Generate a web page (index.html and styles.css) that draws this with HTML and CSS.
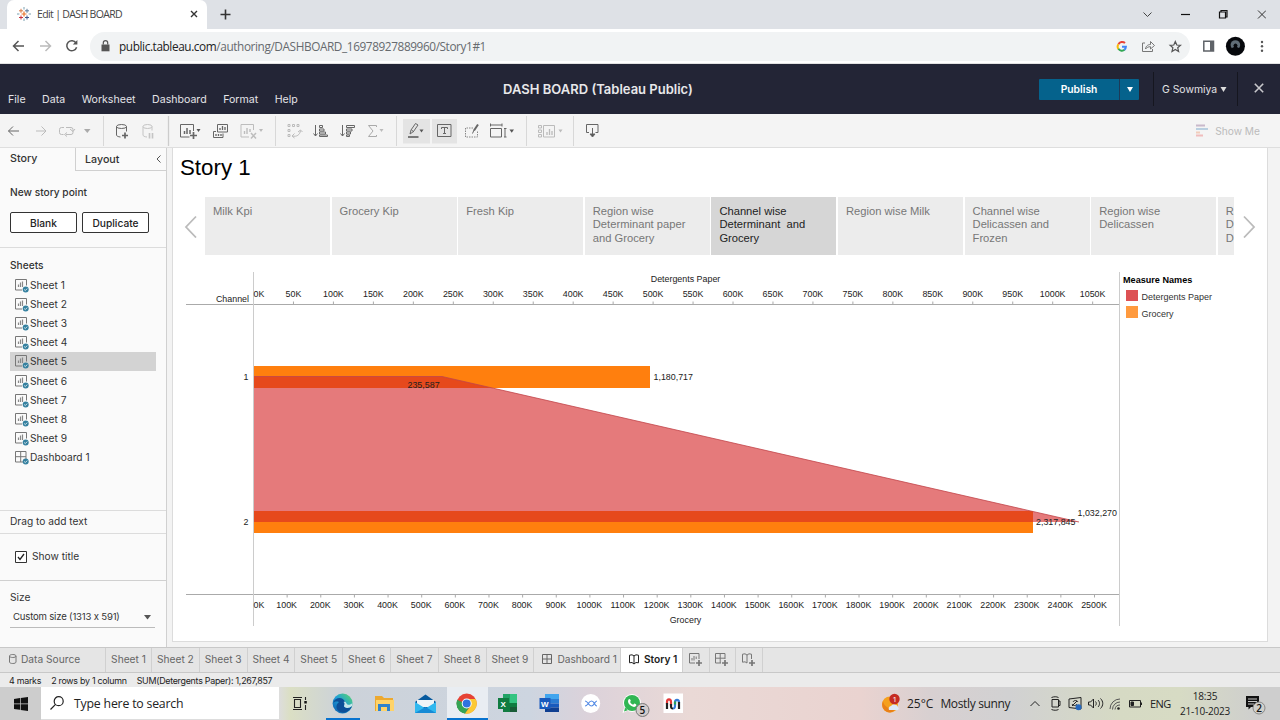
FILE: index.html
```html
<!DOCTYPE html>
<html lang="en">
<head>
<meta charset="utf-8">
<title>Edit | DASH BOARD</title>
<link rel="stylesheet" href="styles.css">
</head>
<body>
<svg class="defs" width="0" height="0" aria-hidden="true">
  <symbol id="sheet" viewBox="0 0 14 14"><path d="M11.500 6.500V.5H.5v10.500h6.500" fill="none" stroke="#777"/><path d="M3.500 8V5.500M5.500 8V3.500M7.500 8V2.500" stroke="#888" stroke-width="1.200"/><circle cx="10.700" cy="10.500" r="3" fill="#34809f"/><path d="M9.200 10.500l1.100 1.100 1.900-2" stroke="#fff" fill="none" stroke-width=".8"/></symbol>
  <symbol id="dash" viewBox="0 0 14 14"><path d="M.5.5h10.500v10.500H.5zM5.700.5v10.500M.5 5.700h10.500" fill="none" stroke="#777"/><circle cx="10.700" cy="10.500" r="3" fill="#34809f"/><path d="M9.200 10.500l1.100 1.100 1.900-2" stroke="#fff" fill="none" stroke-width=".8"/></symbol>
  <symbol id="book" viewBox="0 0 10 11"><path d="M.5 1.200L3 .8l2 1.100 2-1.100 2.500.4v7.600L7 8.500 5 10 3 8.500l-2.500.3zM5 2v8" fill="none" stroke="currentColor"/></symbol>
  <symbol id="grid" viewBox="0 0 10 10"><path d="M.5.5h9v9h-9zM5 .5v9M.5 5h9" fill="none" stroke="currentColor"/></symbol>
</svg>

<header class="tabstrip">
  <div class="tab">
    <svg class="favicon" width="14" height="14" viewBox="0 0 14 14" fill="none"><path d="M7 4.500v5M4.500 7h5" stroke="#e8762c" stroke-width="1.200"/><path d="M4 1.800v4M2 3.800h4" stroke="#d97a45"/><path d="M10 1.800v4M8 3.800h4" stroke="#5b7a9a"/><path d="M4 8.500v4M2 10.500h4" stroke="#c8303c"/><path d="M10 8.500v4M8 10.500h4" stroke="#3b5488"/><path d="M7 0v2.500M7 11.500V14M0 7h2.400M11.600 7H14" stroke="#7aa0b0"/></svg>
    <span class="tab-title">Edit | DASH BOARD</span>
    <svg class="tab-x" width="8" height="8" viewBox="0 0 8 8"><path d="M1 1l6 6M7 1L1 7" stroke="#333" stroke-width="1.400"/></svg>
  </div>
  <svg class="newtab" width="11" height="11" viewBox="0 0 11 11"><path d="M5.500.5v10M.5 5.500h10" stroke="#333" stroke-width="1.600"/></svg>
  <svg class="winctl" width="124" height="14" viewBox="1141 8 124 14" fill="none" stroke="#111"><path d="M1142.500 12.500l4 4 4-4" stroke="#444"/><path d="M1180 14.500h9" stroke-width="1.200"/><path d="M1218.500 12h6v6h-6zM1220 11.500v-1h6v6.500h-1.500" stroke-width="1.200"/><path d="M1257 10.500l8 8M1265 10.500l-8 8" stroke="#333"/></svg>
</header>

<div class="addressbar">
  <svg width="80" height="20" viewBox="0 0 80 20" fill="none"><path d="M24 10H13.500M18.500 5l-5 5 5 5" stroke="#555" stroke-width="1.500"/><path d="M40 10h10M45.500 5l5 5-5 5" stroke="#bbb" stroke-width="1.500"/><path d="M76 7a5 5 0 1 0 .6 4.200" stroke="#555" stroke-width="1.500"/><path d="M77.400 4v4.600h-4.600z" fill="#555"/></svg>
  <div class="omnibox">
    <svg width="9" height="12" viewBox="0 0 9 12"><path d="M.5 4.500h8v6.800h-8z" fill="#555"/><path d="M2.300 4.500V2.800a2.200 2.200 0 0 1 4.400 0v1.700" fill="none" stroke="#555" stroke-width="1.200"/></svg>
    <span class="url"><b>public.tableau.com</b>/authoring/DASHBOARD_16978927889960/Story1#1</span>
    <svg class="omni-icons" width="66" height="14" viewBox="1116 39 66 14" fill="none"><g stroke-width="2"><path d="M1118.400 44.400a4.200 4.200 0 0 1 6.600-1.300" stroke="#ea4335"/><path d="M1118.400 44.200a4.300 4.300 0 0 0 0 4.800" stroke="#fbbc05"/><path d="M1118.400 48.800a4.300 4.300 0 0 0 6.200 1" stroke="#34a853"/><path d="M1124.300 49.900a4.200 4.200 0 0 0 1.600-3.200H1122" stroke="#4285f4"/></g><path d="M1145 43h-2.500v8.500h10V49M1145.500 49c.5-3.500 3-4.500 5-4.500V41.500l4 4-4 3.500v-2.300c-2 0-3.500.5-5 2.300z" stroke="#777"/><path d="M1175.300 41.500l1.500 3.500 3.700.3-2.800 2.400.9 3.700-3.300-2-3.300 2 .9-3.700-2.800-2.400 3.700-.3z" stroke="#555" stroke-width="1.200"/></svg>
  </div>
  <svg class="profile" width="66" height="20" viewBox="1202 36 66 20"><path d="M1203.800 41.300h9.700v9.700h-9.700z" fill="#fff" stroke="#5f6368" stroke-width="1.500"/><path d="M1210 41h3.500v10h-3.500z" fill="#5f6368"/><circle cx="1235.400" cy="46.300" r="9.500" fill="#06080c"/><circle cx="1235.400" cy="45" r="4.800" fill="#8799a5" opacity=".7"/><path d="M1231 51c0-3 2-3.500 3-4a2 2 0 1 1 3 0c1 .5 3 1 3 4z" fill="#06080c"/><g fill="#555"><circle cx="1262" cy="42" r="1.200"/><circle cx="1262" cy="46.300" r="1.200"/><circle cx="1262" cy="50.700" r="1.200"/></g></svg>
</div>

<div class="apphead">
  <nav class="menu"><span>File</span><span>Data</span><span>Worksheet</span><span>Dashboard</span><span>Format</span><span>Help</span></nav>
  <div class="apptitle">DASH BOARD (Tableau Public)</div>
  <div class="account">
    <div class="publish"><span>Publish</span><i><svg width="6" height="5" viewBox="0 0 6 5"><path d="M0 0h6L3 5z" fill="#fff"/></svg></i></div>
    <div class="user"><span>G Sowmiya</span><svg width="7" height="5" viewBox="0 0 6 5"><path d="M0 0h6L3 5z" fill="#ddd"/></svg></div>
    <svg class="close" width="10" height="10" viewBox="0 0 10 10"><path d="M.8.8l8.400 8.400M9.200.8L.8 9.200" stroke="#c8c8cc" stroke-width="1.600"/></svg>
  </div>
</div>

<div class="toolbar">
  <svg width="620" height="33" viewBox="0 114 620 33" fill="none" stroke="#666">
    <path d="M19 131H8.500M13 126.500L8.500 131l4.500 4.500"/>
    <path d="M36 131h10M41.500 126.500L46 131l-4.500 4.500" stroke="#bbb"/>
    <path d="M64 127.500h-2.500a2 2 0 0 0-2 2v3a2 2 0 0 0 2 2h2M66 134.500h5a2 2 0 0 0 2-2v-3a2 2 0 0 0-2-2h-5M67 132.500l-2.500 2 2.500 2M70 129l3 2.500 2-2.500" stroke="#bbb"/>
    <path d="M84 129h6.500l-3.200 4z" fill="#aaa" stroke="none"/>
    <path d="M103.500 116v30M275.500 116v30M396.500 116v30M526.500 116v30M573.500 116v30" stroke="#d8d8d8"/><path d="M168.500 116v30" stroke="#ccc" stroke-width="1.300"/>
    <ellipse cx="121.500" cy="126.500" rx="5" ry="2"/><path d="M116.500 126.500v8.500c0 1 1.500 1.800 4 2M126.500 126.500v5"/><path d="M125 132.500v6M122 135.500h6" stroke-width="1.700"/>
    <g stroke="#c4c4c4"><ellipse cx="147.500" cy="126.500" rx="4.500" ry="2"/><path d="M143 126.500v8.500c0 1 1.500 1.800 4 2M152 126.500v4"/><path d="M149.500 133v5.500M152.500 133v5.500" stroke-width="1.600"/></g>
    <path d="M193.500 131v-6.500h-13v12.500h9"/><path d="M184.500 134v-3M187 134v-6M190 134v-4" stroke-width="1.500"/><path d="M193.500 132v7M190 135.500h7" stroke-width="1.700"/><path d="M196.500 129h4l-2 3z" fill="#555" stroke="none"/>
    <path d="M217.500 124.500h10v7.500h-10zM216 131.500h-2.500v6h9.500v-4"/><path d="M220 130v-2M222.500 130v-4M225 130v-3M216 136v-2M218.500 136v-2M221 136v-2" stroke-width="1.300"/>
    <g stroke="#bdbdbd"><path d="M253.500 130v-5.500h-12.500v12.500h8"/><path d="M244.500 134v-3M247 134v-6M250 132v-3" stroke-width="1.400"/><path d="M251 133l5 5.500M256 133l-5 5.500" stroke-width="1.500"/></g><path d="M259 129h4l-2 3z" fill="#bbb" stroke="none"/>
    <path d="M288 124.500h2v2h-2zM292.500 124.500h2v2h-2zM297 124.500h2v2h-2zM288 129.500h2v2h-2zM288 134.500h2v2h-2zM292.500 136c4 1 7.500-1 8-5.500M298 132l2.500-2 2 2M294.500 133.500l-2.500 2.500 2.500 2" stroke="#bbb"/>
    <path d="M315.500 125v11M313.500 133.500l2 2.500 2-2.500M319.500 125.500h3v2h-3zM319.500 129h4.500v2h-4.500zM319.500 132h6v2h-6zM319.500 135h8v1.500h-8z"/>
    <path d="M342.500 125v11M340.500 133.500l2 2.500 2-2.500M346.500 125.500h8v2h-8zM346.500 129h5.500v2h-5.500zM346.500 132h4v2h-4zM346.500 135h3v1.500h-3z"/>
    <path d="M376.500 127v-1.500h-8l4.500 5.500-4.500 5.500h8V135" stroke="#aaa"/><path d="M379.500 129h4l-2 3z" fill="#bbb" stroke="none"/>
    <path d="M403 119h27v24.500h-27zM432 119h25v24.500h-25z" fill="#e4e4e4" stroke="none"/>
    <path d="M410 134l1-4 4.500-6.500 2.500 1.500-4.500 6.500zM411.500 130l2.500 2"/><path d="M408 137h10.500" stroke-width="1.700"/><path d="M419.500 129.500h4l-2 3z" fill="#555" stroke="none"/>
    <path d="M437.500 124.500h13.500v12h-13.500z"/><path d="M441.500 129v-1.500h6v1.500M444.500 127.500v6M443 133.500h3"/>
    <path d="M473 128h-7.500v9h12v-6" stroke="#888" stroke-dasharray="1.500 1"/><path d="M478 124.500l-4 6" stroke-width="2"/><path d="M474 130l-1.500 3.500"/>
    <path d="M490.500 128.500h11v8.500h-11z"/><path d="M490 125h12M490.500 123.500v3M502 123.500v3M505 128.500v8.500M504 128.500h2.500M504 137h2.500"/><path d="M509.500 129.500h4.500l-2.300 3.200z" fill="#555" stroke="none"/>
    <g stroke="#bbb"><path d="M538.500 125.500h3v2.500h-3zM538.500 130h3v2.500h-3zM538.500 134.500h3v2.500h-3zM543.500 125.500h11v11.500h-11z"/><path d="M547 135v-3M549.500 135v-6M552 135v-4" stroke-width="1.300"/></g><path d="M558.500 129.500h4l-2 3z" fill="#bbb" stroke="none"/>
    <path d="M589 132.500h-2.500v-8h11.500v8h-2.500M592.500 128v8"/><path d="M590 134l2.500 3 2.500-3z" fill="#555"/>
  </svg>
  <div class="showme"><svg width="13" height="13" viewBox="0 0 13 13"><path d="M0 1.500h9" stroke="#c9b9cb" stroke-width="2"/><path d="M0 5h12" stroke="#b9cfe0" stroke-width="2"/><path d="M0 8.500h4" stroke="#f1cdbb" stroke-width="2"/><path d="M0 11.500h7" stroke="#f0bcbc" stroke-width="2"/></svg><span>Show Me</span></div>
</div>

<main class="work">
  <aside class="side">
    <div class="side-tabs"><span class="on">Story</span><span class="off">Layout<svg width="5" height="8" viewBox="0 0 5 8"><path d="M4.500.5L1 4l3.500 3.500" fill="none" stroke="#555"/></svg></span></div>
    <section class="newpoint"><h4>New story point</h4><div class="btns"><button>Blank</button><button>Duplicate</button></div></section>
    <section class="sheets">
      <h4>Sheets</h4>
      <ul>
        <li><svg><use href="#sheet"/></svg>Sheet 1</li><li><svg><use href="#sheet"/></svg>Sheet 2</li><li><svg><use href="#sheet"/></svg>Sheet 3</li><li><svg><use href="#sheet"/></svg>Sheet 4</li><li class="sel"><svg><use href="#sheet"/></svg>Sheet 5</li><li><svg><use href="#sheet"/></svg>Sheet 6</li><li><svg><use href="#sheet"/></svg>Sheet 7</li><li><svg><use href="#sheet"/></svg>Sheet 8</li><li><svg><use href="#sheet"/></svg>Sheet 9</li><li><svg><use href="#dash"/></svg>Dashboard 1</li>
      </ul>
    </section>
    <section class="drag">Drag to add text</section>
    <section class="showtitle"><svg width="12" height="12" viewBox="0 0 12 12"><path d="M.5.5h11v11H.5z" fill="#fff" stroke="#333"/><path d="M3 6l2 2.500L9 3" fill="none" stroke="#222" stroke-width="1.300"/></svg><span>Show title</span></section>
    <section class="size"><div>Size</div><div class="select"><span>Custom size (1313 x 591)</span><svg width="7" height="5" viewBox="0 0 7 5"><path d="M0 0h7L3.500 4.500z" fill="#555"/></svg></div></section>
  </aside>

  <article class="canvas">
    <h1>Story 1</h1>
    <div class="points">
      <svg width="13" height="24" viewBox="0 0 13 24"><path d="M12 2.500L2 13l10 10.500" fill="none" stroke="#bbb" stroke-width="1.800"/></svg>
      <div class="strip">
        <div>Milk Kpi</div><div>Grocery Kip</div><div>Fresh Kip</div><div>Region wise<br>Determinant paper<br>and Grocery</div><div class="cur">Channel wise<br>Determinant&nbsp; and<br>Grocery</div><div>Region wise Milk</div><div>Channel wise<br>Delicassen and<br>Frozen</div><div>Region wise<br>Delicassen</div><div>R<br>D<br>D</div>
      </div>
      <svg class="next" width="13" height="24" viewBox="0 0 13 24"><path d="M1 2.500L11 13 1 23.500" fill="none" stroke="#bbb" stroke-width="1.800"/></svg>
    </div>
    <div class="viz">
      <svg class="chart" id="chart" width="940" height="360" viewBox="182 268 940 360"></svg>
      <div class="legend"><b>Measure Names</b><p><i class="red"></i>Detergents Paper</p><p><i class="orange"></i>Grocery</p></div>
    </div>
  </article>
</main>

<nav class="sheetbar">
  <span class="src"><svg width="8" height="10" viewBox="0 0 8 10"><path d="M.5 2v6c0 2 6.500 2 6.500 0V2C7 0 .5 0 .5 2c0 2 6.500 2 6.500 0" fill="none" stroke="#777"/></svg>Data Source</span>
  <span class="s first">Sheet 1</span><span class="s">Sheet 2</span><span class="s">Sheet 3</span><span class="s">Sheet 4</span><span class="s">Sheet 5</span><span class="s">Sheet 6</span><span class="s">Sheet 7</span><span class="s">Sheet 8</span><span class="s">Sheet 9</span>
  <span class="d"><svg width="10" height="10"><use href="#grid"/></svg>Dashboard 1</span>
  <span class="st"><svg width="10" height="11"><use href="#book"/></svg>Story 1</span>
  <span class="add"><svg width="14" height="14" viewBox="0 0 14 14" fill="none" stroke="#777"><path d="M10 6V.5H.5V10H6M3 7.500V5M5 7.500V3M7.200 6V3.500"/><path d="M10 7v6M7 10h6" stroke-width="1.700"/></svg></span>
  <span class="add"><svg width="14" height="14" viewBox="0 0 14 14" fill="none" stroke="#777"><path d="M10 6V.5H.5V10H6M5.200.5V10M.5 5.200H10"/><path d="M10 7v6M7 10h6" stroke-width="1.700"/></svg></span>
  <span class="add"><svg width="14" height="14" viewBox="0 0 14 14" fill="none" stroke="#777"><path d="M9.500 6V1.200L7 .8 5 2 3 .8.500 1.200v8L3 8.800 5 10V2"/><path d="M10 7v6M7 10h6" stroke-width="1.700"/></svg></span>
</nav>
<div class="status"><span>4 marks</span><span>2 rows by 1 column</span><span>SUM(Detergents Paper): 1,267,857</span></div>

<footer class="taskbar">
  <div class="start"><svg width="14" height="14" viewBox="0 0 14 14"><path d="M0 2l6-.9v5.400H0zM6.700 1L14 0v6.500H6.700zM0 7.200h6v5.600L0 12zM6.700 7.200H14V14l-7.300-1z" fill="#111"/></svg></div>
  <div class="search"><svg width="14" height="14" viewBox="0 0 14 14" fill="none" stroke="#222" stroke-width="1.200"><circle cx="8.700" cy="5.200" r="4.500"/><path d="M5.500 8.400L.5 13.500"/></svg><span>Type here to search</span></div>
  <svg class="apps" width="601" height="33" viewBox="279 687 601 33">
    <defs>
      <linearGradient id="edge" x1="0" y1="1" x2="1" y2="0"><stop offset="0" stop-color="#0b55a8"/><stop offset=".5" stop-color="#1f9fd8"/><stop offset="1" stop-color="#5fdc63"/></linearGradient>
    </defs>
    <path d="M447 687h41v33h-41z" fill="#e9edf2"/><path d="M326 718h34v2h-34zM447 718h41v2h-41z" fill="#0873cf"/>
    <g fill="none" stroke="#222" stroke-width="1.100"><path d="M294.500 699.500h6v8h-6zM293 697.500h9M293 709.500h9M305.500 697v3M305.500 705v5"/></g><path d="M304.300 701h2.500v2.500h-2.500z" fill="#111"/>
    <circle cx="342.600" cy="703.500" r="10" fill="url(#edge)"/><path d="M333 703c2-6 10-7 12-1 .5 2-1 3-1 4 0 2 5 3 8 0-2 6-8 8-12 6-4-2-5-7-1-10-3-1-5 0-6 1z" fill="#0d4f98"/><path d="M343.500 702c1.500 1 1 2.500.5 4 0 2 5 3 8 0l.5-3c-2 2-5 2.500-6 .5-.5-1.500-1.500-2-3-1.500z" fill="#c9e6ea"/>
    <path d="M375 696h7l2 2h9v13h-18z" fill="#eda92f"/><path d="M376 700h18v11h-18z" fill="#ffd368"/><path d="M378 704h12v7h-3v-4h-6v4h-3z" fill="#2f83cc"/>
    <path d="M415 702l10.500-7.500L436 702v11h-21z" fill="#075a9e"/><path d="M417 700h17v7h-17z" fill="#eff4f7"/><path d="M415 702l10.500 6.500L436 702v11h-21z" fill="#30b8ef"/><path d="M415 713l10.500-6 10.500 6z" fill="#168ad5"/>
    <circle cx="466.700" cy="703.500" r="10" fill="#e64235"/><path d="M457.300 699.500l5 7.500 3.300 6.500-3-.8a10 10 0 0 1-5.300-13.200z" fill="#35a454"/><path d="M457.300 700a10 10 0 0 0 8 13.500l5-8z" fill="#35a454"/><path d="M466 699h9.600a10 10 0 0 1-10.600 14.500l6-8z" fill="#fcc934"/><circle cx="466.700" cy="703.500" r="5" fill="#fff"/><circle cx="466.700" cy="703.500" r="4" fill="#2f72df"/>
    <path d="M503 694h14v18h-14z" fill="#21a366"/><path d="M503 703h14v9h-14z" fill="#107c41"/><path d="M510 694h7v9h-7z" fill="#33c481"/><path d="M510 707h7v5h-7z" fill="#185c37"/><rect x="498" y="698" width="11" height="11" fill="#107c41"/><text x="500.500" y="706.500" class="officon">X</text>
    <path d="M545 694h14v5h-14z" fill="#41a5ee"/><path d="M545 699h14v4.500h-14z" fill="#2b7cd3"/><path d="M545 703.500h14v4h-14z" fill="#185abd"/><path d="M545 707.500h14v4.500h-14z" fill="#103f91"/><rect x="539.500" y="698" width="11" height="11" fill="#185abd"/><text x="541" y="706.500" class="officon">W</text>
    <circle cx="590.700" cy="703.500" r="9.500" fill="#fff"/><path d="M585 701c3 0 3.500 5 6.500 5s3-5 5.500-5M585 706c3 0 3.500-5 6.500-5s3 5 5.500 5" fill="none" stroke="#568ce5" stroke-width="1.200"/>
    <circle cx="632" cy="703" r="9" fill="#fff"/><path d="M622.500 713l1.500-5 3 3z" fill="#fff"/><circle cx="632" cy="703" r="8" fill="#31b653"/><path d="M624 711.500l1.200-4 2.500 2.800z" fill="#31b653"/><path d="M628.500 699.500c1.500-1.500 2 .5 2.300 1.300l-.7 1.200c.7 1.500 1.800 2.300 3 2.800l1.200-1.200c1 .3 2.500 1 2 2-1.500 3.500-8.500-.5-8.300-4.500z" fill="#fff"/>
    <circle cx="642.500" cy="710" r="6.500" fill="#d2cccc" stroke="#777"/><text x="639.500" y="714" class="badge">5</text>
    <path d="M663.500 693.500h19.500v19.500h-19.500z" fill="#fff"/><g fill="none" stroke-width="2.200"><path d="M667 704v-2c0-3.500 4-3.500 4 0v3" stroke="#e33939"/><path d="M667 703v6M671 704v2c0 2 0 2.500 2 2.500" stroke="#222"/><path d="M673 708.500c2 0 2-1 2-3v-3c0-3.500 4-3.500 4 0" stroke="#347bd8"/><path d="M675 701.500v3" stroke="#27a05a"/><path d="M679 702v7" stroke="#222"/></g>
  </svg>
  <div class="weather"><svg width="22" height="22" viewBox="0 0 22 22"><circle cx="10" cy="11.500" r="8" fill="#f5a01d"/><path d="M10 19.500A8 8 0 0 1 3 8c1 6 7 9 13 7a8 8 0 0 1-6 4.500z" fill="#e98018"/><path d="M9 17a3 3 0 0 1 2-4 4 4 0 0 1 7 1 2 2 0 0 1 0 3z" fill="#dce9f8"/><circle cx="14.500" cy="6" r="5.200" fill="#c52b22"/><text x="12.500" y="9" class="alert">1</text></svg><span>25°C</span><span class="sky">Mostly sunny</span></div>
  <svg class="tray" width="122" height="20" viewBox="1028 694 122 20" fill="none" stroke="#222"><path d="M1030.500 706l4.500-4.500 4.500 4.500"/><path d="M1052 699.500h6.500v7.500H1052zM1058.500 701h1.500v4.500h-1.500M1051.500 697.500c2.500-1 5-1 7 0M1051.500 709.500c2.500 1 5 1 7 0"/><path d="M1069 699l12-1.500V709l-12-1.500zM1072 706l5-5M1073 702c1-2 4-2 5 0M1072 704c1 2 4 2 5 0"/><circle cx="1078.500" cy="707.300" r="3" fill="#2669bd" stroke="none"/><path d="M1088.500 702h2l3-3v9l-3-3h-2zM1095.500 701.500c1 1 1 3 0 4M1098 700c2 2 2 5 0 7M1100.500 698.500c3 3 3 7 0 10"/><path d="M1110 709a10 10 0 0 1 10-10M1112.500 709.500a7.500 7.500 0 0 1 7.500-7.500M1115 709.500a5 5 0 0 1 5-4.500" stroke="#555"/><circle cx="1118.500" cy="708.500" r="1.300" fill="#222" stroke="none"/><path d="M1129.500 700.500h11v6.500h-11zM1141.500 702.500v2.500"/><path d="M1131 702h2.500v3.500h-2.500z" fill="#222"/></svg>
  <span class="lang">ENG</span>
  <div class="clock"><span>18:35</span><span>21-10-2023</span></div>
  <svg class="notif" width="22" height="22" viewBox="0 0 22 22"><path d="M1 2h13v11H6l-2.500 2.500V13H1z" fill="#111"/><path d="M3 5h9M3 7.500h9M3 10h6" stroke="#ddd" stroke-width=".9"/><circle cx="14" cy="14" r="6" fill="#d0d0cc" stroke="#888"/><text x="11.200" y="17.700" class="badge">2</text></svg>
</footer>
<script src="chart.js"></script>
</body>
</html>
```

FILE: chart.js
```js
const NS = "http://www.w3.org/2000/svg";
const chart = document.getElementById("chart");
function add(tag, attrs, text, parent) {
  const el = document.createElementNS(NS, tag);
  for (const k in attrs) el.setAttribute(k, attrs[k]);
  if (text !== undefined) el.textContent = text;
  (parent || chart).appendChild(el);
  return el;
}
const LEFT = 253.5, RIGHT = 1119.5, TOP = 304.5, BOTTOM = 594.5;
const area = `M${LEFT} 376.500H442L1079 522H${LEFT}z`;
const edge = "M253.500 376.500H442L1079 522";

// marks
add("path", { d: area, fill: "#e57a7b" });
add("path", { d: edge, class: "edge" });
const bars = "M253 366h397v22H253zM253 511h780v22H253z";
add("path", { d: bars, fill: "#ff7f0e" });
const clip = add("clipPath", { id: "bars" });
add("path", { d: bars }, undefined, clip);
add("path", { d: area, fill: "#e6491c", "clip-path": "url(#bars)" });
add("path", { d: edge, class: "edge", "clip-path": "url(#bars)" });

// axes
add("path", { d: `M186 ${TOP}H${RIGHT}M186 ${BOTTOM}H${RIGHT}`, class: "axis" });
add("path", { d: `M${LEFT} 272V626M${RIGHT} 272V626`, class: "frame" });
for (let i = 0; i <= 21; i++) {
  const x = LEFT + i * 39.96;
  if (i) add("path", { d: `M${x} 301.500V304`, class: "axis" });
  add("text", { x: i ? x : LEFT, y: 297, class: i ? "mid" : "" }, i * 50 + "K");
}
for (let i = 0; i <= 25; i++) {
  const x = LEFT + i * 33.640;
  if (i) add("path", { d: `M${x} 595V597.500`, class: "axis" });
  add("text", { x: i ? x - .5 : LEFT, y: 608, class: i ? "mid" : "" }, i * 100 + "K");
}
add("text", { x: 685.5, y: 282, class: "mid title" }, "Detergents Paper");
add("text", { x: 685.5, y: 623, class: "mid title" }, "Grocery");
add("text", { x: 249, y: 302, class: "end title" }, "Channel");
add("text", { x: 248.5, y: 380, class: "end" }, "1");
add("text", { x: 248.5, y: 525, class: "end" }, "2");
add("text", { x: 407.5, y: 388 }, "235,587");
add("text", { x: 653.5, y: 380 }, "1,180,717");
add("text", { x: 1036, y: 525 }, "2,317,845");
add("text", { x: 1077.5, y: 516 }, "1,032,270");
```

FILE: styles.css
```css
* { box-sizing: border-box; }
body { margin: 0; width: 1280px; height: 720px; overflow: hidden; display: flex; flex-direction: column; font-family: Inter, sans-serif; font-size: 10.200px; color: #333; background: #fff; }
svg { flex: none; display: block; }
.defs { position: absolute; }
h1, h4, p, ul { margin: 0; padding: 0; font-weight: 400; }
span { white-space: nowrap; }

.tabstrip { flex: none; height: 29px; background: #dee1e6; display: flex; align-items: center; padding-left: 7px; }
.tab { width: 200px; height: 29px; background: #fff; border-radius: 7px 7px 0 0; display: flex; align-items: center; padding: 0 9px 1px 10px; }
.tab-title { font: 10.500px "Open Sans", sans-serif; letter-spacing: -.65px; margin-left: 6px; color: #444; }
.tab-x { margin-left: auto; }
.newtab { margin-left: 13px; }
.winctl { margin-left: auto; margin-right: 14px; }

.addressbar { flex: none; height: 35px; border-bottom: 1px solid #e3e3e3; display: flex; align-items: center; }
.omnibox { margin-left: 10px; width: 1100px; height: 29px; border-radius: 15px; background: #f1f3f4; display: flex; align-items: center; padding: 0 8px 0 11px; }
.url { font: 11.800px "Open Sans", sans-serif; margin-left: 9px; color: #666a6e; letter-spacing: -.4px; }
.url b { font-weight: 400; color: #222; }
.omni-icons { margin-left: auto; }
.profile { margin-left: 12px; }

.apphead { flex: none; height: 50px; background: #232536; color: #e4e4e8; display: flex; align-items: center; }
.menu { width: 420px; display: flex; padding: 20px 0 0 8px; gap: 16.500px; font-size: 10.600px; }
.apptitle { width: 356px; text-align: center; font-size: 13px; font-weight: 600; color: #e8e8ea; }
.account { flex: 1; display: flex; align-items: center; padding-left: 263px; }
.publish { width: 100px; height: 21px; background: #05628c; border-radius: 1px; display: flex; align-items: center; color: #fff; font-weight: 600; font-size: 10.300px; }
.publish span { width: 80px; text-align: center; }
.publish i { width: 20px; height: 21px; border-left: 1px solid #1d3a58; display: flex; align-items: center; justify-content: center; }
.user { margin-left: 14px; width: 85px; height: 34px; border: solid #15161f; border-width: 0 1px; display: flex; align-items: center; gap: 3px; padding-left: 8px; font-size: 10.400px; }
.close { margin: -2px 0 0 16px; }

.toolbar { flex: none; height: 34px; background: #f4f4f4; border-bottom: 1px solid #dedede; display: flex; justify-content: space-between; align-items: center; }
.showme { display: flex; align-items: center; gap: 6px; color: #bbb; padding-right: 20px; }

.work { flex: none; height: 499px; display: flex; background: #f3f3f3; }
.side { width: 167px; background: #fafafa; border-right: 1px solid #d0d0d0; display: flex; flex-direction: column; }
.side-tabs { display: flex; height: 23px; font-size: 10.700px; }
.side-tabs .on { width: 75px; padding: 4px 0 0 10px; font-weight: 500; }
.side-tabs .off { flex: 1; border: solid #d0d0d0; border-width: 0 0 1px 1px; padding: 0 5px 0 9px; display: flex; justify-content: space-between; align-items: center; font-weight: 500; }
h4 { font-size: 10.200px; font-weight: 500; line-height: 14px; }
.newpoint { height: 77px; padding: 14px 0 0 10px; border-bottom: 1px solid #dcdcdc; }
.btns { display: flex; gap: 5px; margin-top: 13px; }
.btns button { width: 67px; height: 21px; padding: 0; background: #fff; border: 1px solid #333; border-radius: 2px; font: 500 10.200px Inter, sans-serif; color: #222; }
.sheets { height: 262px; padding: 10px 10px 0; }
.sheets ul { list-style: none; margin-top: 3px; }
.sheets li { height: 19.200px; display: flex; align-items: center; padding-left: 5px; gap: 1px; }
.sheets li svg { width: 14px; height: 14px; margin-top: 2px; }
.sheets .sel { background: #d3d3d3; }
.drag { height: 24px; border: solid #dcdcdc; border-width: 1px 0; padding: 0 0 0 10px; line-height: 21px; }
.showtitle { height: 47px; border-bottom: 1px solid #d0d0d0; display: flex; align-items: center; padding-left: 15px; gap: 5px; }
.showtitle span { margin-top: -2px; }
.size { padding: 9px 11px 0 10px; line-height: 14px; }
.select { height: 23px; border-bottom: 1px solid #bbb; display: flex; align-items: center; justify-content: space-between; padding: 2px 4px 0 3px; margin-top: 1px; font-size: 9.600px; }
.select span { letter-spacing: -.2px; }

.canvas { width: 1096px; height: 494px; margin-left: 5px; background: #fff; border: solid #dcdcdc; border-width: 0 1px 1px; font-family: "Liberation Sans", Arial, sans-serif; }
h1 { font-size: 22.300px; line-height: 26px; padding: 7px 0 0 7px; color: #000; }
.points { margin: 16px 0 0 11px; display: flex; align-items: center; height: 58px; }
.strip { margin-left: 8px; width: 1029px; height: 58px; overflow: hidden; display: flex; gap: 1.500px; }
.strip div { flex: none; width: 125.100px; background: #ececec; padding: 8px 0 0 8px; font-size: 11.200px; line-height: 13.300px; color: #777; white-space: nowrap; }
.strip .cur { background: #d6d6d6; color: #222; }
.next { margin-left: 9px; }
.viz { display: flex; margin: 13px 0 0 9px; }
.chart text { font: 8.900px "Liberation Sans", Arial, sans-serif; fill: #222; }
.chart .mid { text-anchor: middle; }
.chart .end { text-anchor: end; }
.axis { stroke: #aaa; fill: none; }
.frame { stroke: #ccc; fill: none; }
.edge { stroke: #c2454a; fill: none; stroke-width: .8; }
.legend { font-size: 9px; color: #333; padding: 7px 0 0 1px; }
.legend b { display: block; font-size: 9.100px; line-height: 10px; color: #000; height: 14px; }
.legend p { display: flex; align-items: center; height: 16.500px; gap: 4px; padding-left: 3px; }
.legend i { width: 11.500px; height: 11.500px; margin-top: -4px; }
.red { background: #dd5154; }
.orange { background: #ff9a3e; }

.sheetbar { flex: none; height: 26px; background: #e5e5e5; border: solid #c8c8c8; border-width: 1px 0; display: flex; color: #666; }
.sheetbar > span { border-right: 1px solid #d0d0d0; display: flex; align-items: center; padding-bottom: 2px; }
.src { width: 106px; padding-left: 9px; gap: 4px; }
.s { width: 47.800px; justify-content: center; }
.sheetbar .first { width: 46px; }
.d { width: 86.500px; padding-left: 8px; gap: 5px; }
.sheetbar .st { width: 62px; padding-left: 8px; gap: 5px; background: #fff; color: #222; font-weight: 600; }
.sheetbar .add { width: 26.700px; justify-content: center; padding: 0; }

.status { flex: none; height: 14px; background: #ebebeb; display: flex; align-items: center; padding-left: 9px; gap: 10px; font-size: 8.900px; letter-spacing: -.27px; color: #222; }

.taskbar { flex: none; height: 33px; display: flex; align-items: center; font-family: "Open Sans", sans-serif; color: #222; background: linear-gradient(90deg, #ddd 279px, #dbdfc4 290px, #ccd2d9 340px, #cdd5e0 530px, #dcd2da 590px, #ead9d6 690px, #ead3d0 860px, #d8d0d1 930px, #d1d1d2 1010px, #d6dac4 1120px, #d7dbc4 1180px, #cecece 1260px); }
.start { width: 41px; height: 33px; background: #cdcdcd; display: flex; align-items: center; justify-content: center; }
.search { width: 238px; height: 33px; background: #fff; border-bottom: 1px solid #ddd; display: flex; align-items: center; padding-left: 9px; gap: 10px; font-size: 12.300px; letter-spacing: -.2px; }
.officon { font: bold 8px "Liberation Sans", sans-serif; fill: #fff; }
.badge { font: 600 10px "Open Sans", sans-serif; fill: #111; }
.alert { font: 8px "Open Sans", sans-serif; fill: #fff; }
.weather { display: flex; align-items: center; width: 148px; gap: 7px; font-size: 12px; }
.weather svg { margin-right: -2px; }
.sky { letter-spacing: -.35px; }
.lang { width: 30px; font-size: 11px; letter-spacing: -.6px; }
.clock { width: 50px; display: flex; flex-direction: column; align-items: center; font-size: 10px; line-height: 15px; letter-spacing: -.2px; }
.notif { margin: 3px 0 0 15px; }
```
